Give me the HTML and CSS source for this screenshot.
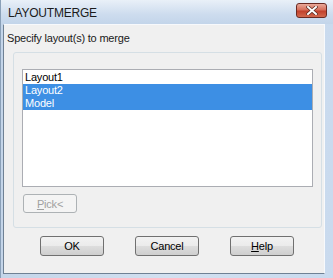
FILE: index.html
```html
<!DOCTYPE html>
<html lang="en">
<head>
  <meta charset="UTF-8">
  <title>LAYOUTMERGE</title>
  <link rel="stylesheet" href="styles.css">
</head>
<body>

  <div class="window">
    <div class="titlebar">
      <span class="title">LAYOUTMERGE</span>
      <button class="close" title="Close">
        <svg width="12" height="9" viewBox="0 0 12 9">
          <path d="M2 1 L10 8 M10 1 L2 8" stroke="#5a2a20" stroke-width="3.4" stroke-linecap="square"/>
          <path d="M2 1 L10 8 M10 1 L2 8" stroke="#ffffff" stroke-width="2" stroke-linecap="square"/>
        </svg>
      </button>
    </div>

    <div class="client">
      <p class="prompt">Specify layout(s) to merge</p>

      <div class="group">
        <ul class="list">
          <li>Layout1</li>
          <li class="selected">Layout2</li>
          <li class="selected">Model</li>
        </ul>
        <button class="btn pick" disabled><u>P</u>ick&lt;</button>
      </div>

      <div class="actions">
        <button class="btn">OK</button>
        <button class="btn">Cancel</button>
        <button class="btn"><u>H</u>elp</button>
      </div>
    </div>
  </div>

</body>
</html>
```

FILE: styles.css
```css
* { margin: 0; padding: 0; box-sizing: border-box; }
body {
  background: #ffffff;
  font-family: 'Liberation Sans', Arial, sans-serif;
  font-size: 11px;
  letter-spacing: -0.2px;
  color: #000;
}

.window {
  width: 333px;
  height: 278px;
  display: flex;
  flex-direction: column;
  background: linear-gradient(90deg, #c4d5e9, #d2e0f0 50%, #c9daee);
  border-left: 1px solid #8aa0b8;
}

.titlebar {
  height: 24px;
  display: flex;
  align-items: center;
  justify-content: space-between;
  padding: 0 6px 0 7px;
  background: linear-gradient(#e9f0f8, #cddcee 60%, #c3d5ea);
}

.title {
  font-size: 12px;
  color: #1b1b1b;
  padding-top: 1px;
}

.close {
  width: 31px;
  height: 15px;
  margin-top: -3px;
  border: 1px solid #6b2a22;
  border-radius: 3px;
  background: linear-gradient(#e9a99a, #d66f5b 45%, #c2412c 55%, #d2694e);
  display: flex;
  align-items: center;
  justify-content: center;
}

.client {
  flex: 1;
  margin: 0 8px 4px 2px;
  background: #f0f0f0;
  border-left: 1px solid #6f8194;
  border-bottom: 1px solid #6f8194;
  border-top: 1px solid #f7f9fc;
  border-right: 1px solid #f7f9fc;
  padding: 7px 4px 0 3px;
}

.prompt {
  line-height: 13px;
  margin-bottom: 7px;
  color: #1a1a1a;
}

.group {
  margin-left: 6px;
  width: 309px;
  height: 176px;
  border: 1px solid #d5dfe5;
  border-radius: 3px;
  padding: 16px 0 0 8px;
}

.list {
  list-style: none;
  width: 291px;
  height: 118px;
  background: #fff;
  border: 1px solid #abadb3;
  padding-top: 1px;
}

.list li {
  height: 13px;
  line-height: 13px;
  padding-left: 2px;
}

.list .selected {
  background: #3d8fe4;
  color: #fff;
}

.btn {
  font-family: inherit;
  font-size: 11px;
  letter-spacing: inherit;
  color: #000;
  height: 20px;
  width: 64px;
  border: 1px solid #707070;
  border-radius: 3px;
  background: linear-gradient(#f2f2f2, #ebebeb 50%, #dddddd 50%, #cfcfcf);
}

.btn u { text-decoration: underline; }

.pick {
  width: 54px;
  height: 19px;
  margin: 7px 0 0 1px;
  color: #a0a0a0;
  border-color: #adb2b5;
  background: #f4f4f4;
}

.actions {
  display: flex;
  gap: 31px;
  padding: 8px 0 0 33px;
}
```
